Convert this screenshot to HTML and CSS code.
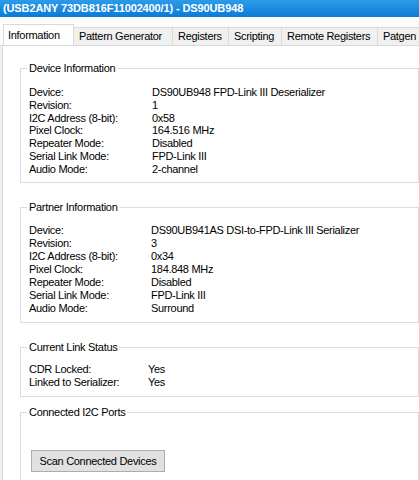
FILE: index.html
```html
<!DOCTYPE html>
<html>
<head>
<meta charset="utf-8">
<link rel="stylesheet" href="styles.css">
</head>
<body>
<div class="titlebar">(USB2ANY 73DB816F11002400/1) - DS90UB948</div>
<div class="tabs">
  <div class="tab active">Information</div>
  <div class="tab w-pattern">Pattern Generator</div>
  <div class="tab w-regs">Registers</div>
  <div class="tab w-script">Scripting</div>
  <div class="tab w-remote">Remote Registers</div>
  <div class="tab w-patgen">Patgen</div>
</div>
<div class="panel">
  <fieldset class="group g-device">
    <legend>Device Information</legend>
    <div class="rows c-device">
      <span>Device:</span><span>DS90UB948 FPD-Link III Deserializer</span>
      <span>Revision:</span><span>1</span>
      <span>I2C Address (8-bit):</span><span>0x58</span>
      <span>Pixel Clock:</span><span>164.516 MHz</span>
      <span>Repeater Mode:</span><span>Disabled</span>
      <span>Serial Link Mode:</span><span>FPD-Link III</span>
      <span>Audio Mode:</span><span>2-channel</span>
    </div>
  </fieldset>
  <fieldset class="group g-partner">
    <legend>Partner Information</legend>
    <div class="rows c-partner">
      <span>Device:</span><span>DS90UB941AS DSI-to-FPD-Link III Serializer</span>
      <span>Revision:</span><span>3</span>
      <span>I2C Address (8-bit):</span><span>0x34</span>
      <span>Pixel Clock:</span><span>184.848 MHz</span>
      <span>Repeater Mode:</span><span>Disabled</span>
      <span>Serial Link Mode:</span><span>FPD-Link III</span>
      <span>Audio Mode:</span><span>Surround</span>
    </div>
  </fieldset>
  <fieldset class="group g-link">
    <legend>Current Link Status</legend>
    <div class="rows c-link">
      <span>CDR Locked:</span><span>Yes</span>
      <span>Linked to Serializer:</span><span>Yes</span>
    </div>
  </fieldset>
  <fieldset class="group g-i2c">
    <legend>Connected I2C Ports</legend>
    <button class="btn">Scan Connected Devices</button>
  </fieldset>
</div>
</body>
</html>
```
FILE: styles.css
```css
html, body {
  margin: 0;
  padding: 0;
  height: 100%;
  overflow: hidden;
}
body {
  background: #f0f0f0;
  font-family: "Liberation Sans", Arial, sans-serif;
  font-size: 11px;
  letter-spacing: -0.3px;
  color: #000;
  width: 419px;
  height: 480px;
  display: flex;
  flex-direction: column;
}
.titlebar {
  flex: none;
  height: 17px;
  line-height: 17px;
  padding-left: 3px;
  background: linear-gradient(#2e9be9, #0a7bd6);
  color: #fff;
  font-weight: bold;
  font-size: 11px;
  letter-spacing: -0.12px;
  white-space: nowrap;
}
.tabs {
  flex: none;
  display: flex;
  align-items: flex-end;
  height: 29px;
  padding-left: 2px;
  background: #fcfcfc;
  border-bottom: 1px solid #d9d9d9;
  box-sizing: border-box;
  overflow: hidden;
  position: relative;
  z-index: 1;
}
.tab {
  box-sizing: border-box;
  height: 18px;
  line-height: 17px;
  background: #f0f0f0;
  border: 1px solid #d9d9d9;
  border-bottom: none;
  margin-left: -1px;
  padding-left: 5px;
  white-space: nowrap;
  flex: none;
  overflow: hidden;
}
.tab.active {
  width: 71px;
  height: 22px;
  line-height: 20px;
  margin-left: 1px;
  margin-bottom: -1px;
  background: #fff;
  padding-left: 4px;
  position: relative;
  z-index: 2;
}
.w-pattern { width: 100px; }
.w-regs { width: 57px; }
.w-script { width: 54px; }
.w-remote { width: 97px; }
.w-patgen { width: 60px; }
.panel {
  flex: 1;
  min-height: 0;
  overflow: hidden;
  margin-left: 2px;
  background: #fff;
  border-left: 1px solid #d9d9d9;
  padding: 16.3px 0 0 17px;
  box-sizing: border-box;
}
.group {
  width: 399px;
  box-sizing: border-box;
  margin: 0;
  border: 1px solid #dcdcdc;
  padding: 0 0 0 8px;
}
.group legend {
  padding: 0 2px;
  margin-left: -2px;
  line-height: 13px;
}
.rows {
  display: grid;
  line-height: 12.7px;
  white-space: nowrap;
}
.c-device { grid-template-columns: 123px auto; }
.c-partner { grid-template-columns: 122px auto; line-height: 12.9px; }
.c-link { grid-template-columns: 119px auto; line-height: 13.3px; }
.g-device { padding-top: 11px; padding-bottom: 7px; }
.g-partner { margin-top: 17.4px; padding-top: 10.5px; padding-bottom: 8px; }
.g-link { margin-top: 17.5px; padding-top: 8.6px; padding-bottom: 7px; }
.g-i2c { margin-top: 8.5px; padding-top: 31.3px; height: 100px; }
.btn {
  display: block;
  margin-left: 2px;
  width: 134px;
  height: 22px;
  padding: 0;
  font-family: "Liberation Sans", Arial, sans-serif;
  font-size: 11px;
  letter-spacing: -0.3px;
  color: #000;
  background: #e1e1e1;
  border: 1px solid #adadad;
  border-radius: 0;
}
```
